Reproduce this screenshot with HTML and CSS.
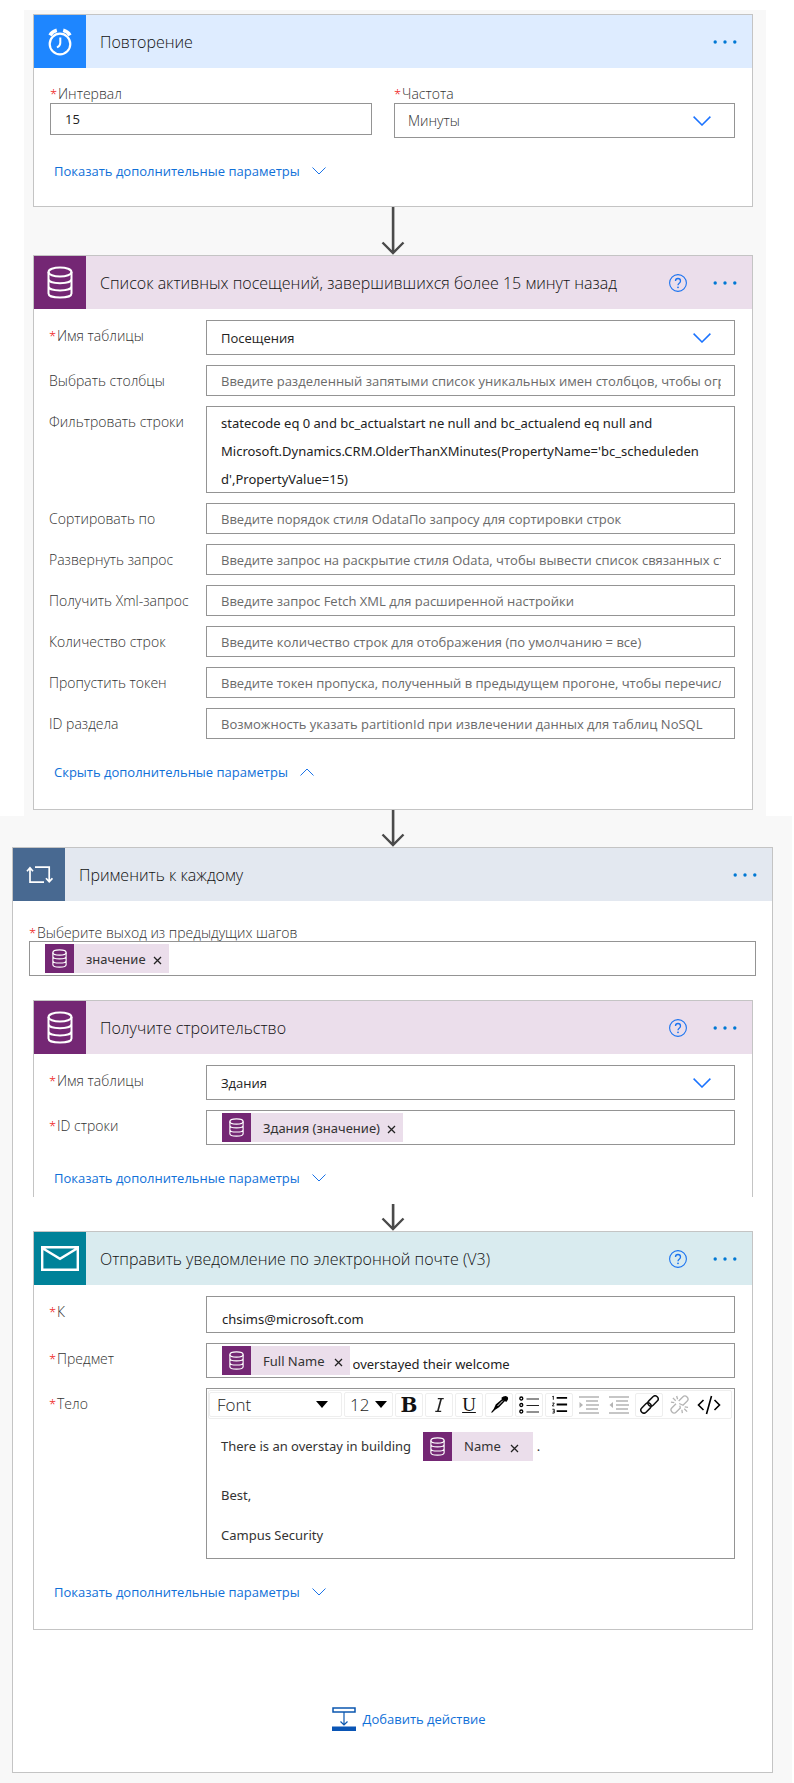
FILE: index.html
```html
<!DOCTYPE html>
<html lang="ru">
<head>
<meta charset="utf-8">
<meta name="viewport" content="width=device-width, initial-scale=1">
<title>Поток</title>
<link rel="stylesheet" href="styles.css">
</head>
<body>
<svg class="sprite" aria-hidden="true">
  <symbol id="i-clock" viewBox="0 0 26 30"><g fill="none" stroke="#fff"><circle cx="13" cy="17" r="10.3" stroke-width="2.2"/><path d="M3 8.3Q5.200 4.500 9.800 3.300M23 8.300Q20.800 4.500 16.200 3.300" stroke-width="3.600"/><path d="M13.300 10.500V16Q13.300 18.600 10 20.500" stroke-width="2"/></g></symbol>
  <symbol id="i-db" viewBox="0 0 26 33"><g fill="none" stroke="#fff" stroke-width="2"><ellipse cx="13" cy="6" rx="11.500" ry="4.600"/><path d="M1.500 6V27.400C1.500 33 24.500 33 24.500 27.400V6M1.500 13C1.500 18.600 24.500 18.600 24.500 13M1.500 20.200C1.500 25.800 24.500 25.800 24.500 20.200"/></g></symbol>
  <symbol id="i-loop" viewBox="0 0 27 18"><path d="M18 16.200H4V2M1 5.200L4 1.800L7 5.200M9 1.200H23.200V15.500M20 12.300L23.200 15.800L26.400 12.300" fill="none" stroke="#fff" stroke-width="1.700"/></symbol>
  <symbol id="i-mail" viewBox="0 0 38 25"><path d="M1.200 1.200H36.800V23.800H1.200ZM1.200 2L19 12.800L36.800 2" fill="none" stroke="#fff" stroke-width="2.400"/></symbol>
  <symbol id="i-dots" viewBox="0 0 24 4"><g fill="#0078d4"><circle cx="2.200" cy="2" r="1.700"/><circle cx="12" cy="2" r="1.700"/><circle cx="21.800" cy="2" r="1.700"/></g></symbol>
  <symbol id="i-help" viewBox="0 0 18 18"><g fill="none" stroke="#1a73f0"><circle cx="9" cy="9" r="8.400" stroke-width="1.100"/><path d="M6.500 7Q6.500 4.500 9 4.500T11.500 7Q11.500 8.300 10.200 9.200Q9 10 9 11.200" stroke-width="1.300"/></g><circle cx="9" cy="13.300" r=".9" fill="#1a73f0"/></symbol>
  <symbol id="i-chev" viewBox="0 0 18 10"><path d="M.6 .6L9 9L17.400 .6" fill="none" stroke="#1a73ff" stroke-width="1.500"/></symbol>
  <symbol id="i-chev-s" viewBox="0 0 14 8"><path d="M.5 .5L7 7L13.500 .5" fill="none" stroke="#1a73e8" stroke-width="1"/></symbol>
  <symbol id="i-x" viewBox="0 0 9 9"><path d="M1 1L8 8M8 1L1 8" fill="none" stroke="#222" stroke-width="1.300"/></symbol>
  <symbol id="i-add" viewBox="0 0 24 24"><path d="M1 1H23V5H1Z" fill="#fff" stroke="#0b57b0" stroke-width="1.500"/><path d="M12 5V18M8.500 14.500L12 18L15.500 14.500" fill="none" stroke="#0b57b0" stroke-width="1.200"/><path d="M0 19.500H24V24H0Z" fill="#0a55b5"/></symbol>
  <symbol id="t-italic" viewBox="0 0 20 20"><path d="M8 2.500H15M5 17.500H12" stroke="#222" stroke-width="1.200"/><path d="M12 2.500L8 17.500" stroke="#222" stroke-width="2"/></symbol>
  <symbol id="t-pen" viewBox="0 0 20 20"><path d="M14 1.500L16.500 1Q19.500 1.500 19 4.500L17.500 7L15.500 6.500L9.500 13L5.500 15.500L2.500 18.500H1L4 14.500L6 10L12.500 4.500L12 3Z" fill="#000"/><path d="M8 11.500L13.500 6" stroke="#fff"/></symbol>
  <symbol id="t-ul" viewBox="0 0 20 20"><path d="M7.500 4H20M7.500 10.500H20M7.500 17H20" stroke="#222" stroke-width="1.200"/><g fill="none" stroke="#000" stroke-width="1.300"><circle cx="2.300" cy="3.500" r="1.500"/><circle cx="2.300" cy="10" r="1.500"/><circle cx="2.300" cy="16.500" r="1.500"/></g></symbol>
  <symbol id="t-ol" viewBox="0 0 20 20"><path d="M7 3H18M7 10H18M7 17H18" stroke="#000" stroke-width="2"/><path d="M3.500 1V5M2.500 2L3.500 1M2.500 8.500H4.500L2.500 11.500H4.500M2.500 15H4.500V19H2.500M3 17H4.500" fill="none" stroke="#000" stroke-width=".9"/></symbol>
  <symbol id="t-in" viewBox="0 0 20 20"><path d="M0 2H20M7 6H19M7 10H20M7 14H19M0 18H20" stroke="#b4b4b4" stroke-width="1.300"/><path d="M.5 7L4 10L.5 13Z" fill="#b4b4b4"/></symbol>
  <symbol id="t-out" viewBox="0 0 20 20"><path d="M0 2H20M7 6H19M7 10H20M7 14H19M0 18H20" stroke="#b4b4b4" stroke-width="1.300"/><path d="M4 7L.5 10L4 13Z" fill="#b4b4b4"/></symbol>
  <symbol id="t-link" viewBox="0 0 20 20"><g fill="none" stroke="currentColor" stroke-width="1.600" transform="rotate(-45 10 10)"><rect x="-1.500" y="6.800" width="12.500" height="6.400" rx="3.200"/><rect x="9" y="6.800" width="12.500" height="6.400" rx="3.200"/></g></symbol>
  <symbol id="t-unlink" viewBox="0 0 20 20"><g fill="none" stroke="#b4b4b4" stroke-width="1.400"><g transform="rotate(-45 10 10)"><path d="M8 6.800H2A3.200 3.200 0 0 0 2 13.200H8L9.500 11M12 6.800H18A3.200 3.200 0 0 1 18 13.200H12L10.500 9"/></g><path d="M7 1L8 4.500M3 3L6 6M1 7.500L4.500 8M12.500 15.500L13 19M15 14.500L18 17.500M15.500 12.500L19 13"/></g></symbol>
  <symbol id="t-code" viewBox="0 0 24 20"><path d="M6.500 5L1.500 10L6.500 15M17.500 5L22.500 10L17.500 15M14.500 1L9.500 19" fill="none" stroke="#000" stroke-width="1.600"/></symbol>
</svg>

<main class="flow">
  <section class="flow-top">
    <article class="card">
      <header class="card-head head-blue">
        <span class="card-icon bg-blue"><svg width="26" height="30"><use href="#i-clock"/></svg></span>
        <h2>Повторение</h2>
        <button class="icon-btn" aria-label="Меню"><svg width="24" height="4"><use href="#i-dots"/></svg></button>
      </header>
      <div class="card-body body-recur">
        <div class="pair">
          <div class="stack">
            <label for="interval"><span class="req">*</span>Интервал</label>
            <input id="interval" class="field short" value="15">
          </div>
          <div class="stack">
            <label for="freq"><span class="req">*</span>Частота</label>
            <div class="select"><select id="freq" class="soft"><option>Минуты</option></select><svg width="18" height="10"><use href="#i-chev"/></svg></div>
          </div>
        </div>
        <a class="more" href="#">Показать дополнительные параметры<svg width="14" height="8"><use href="#i-chev-s"/></svg></a>
      </div>
    </article>

    <svg class="arrow" width="24" height="48" viewBox="0 0 24 48"><path d="M13.500 0V46" stroke="#ccc"/><path d="M12 0V46M1.500 35.500L12 46L22.500 35.500" fill="none" stroke="#4a4a4a" stroke-width="2.400"/></svg>

    <article class="card">
      <header class="card-head head-purple">
        <span class="card-icon bg-purple"><svg width="26" height="33"><use href="#i-db"/></svg></span>
        <h2>Список активных посещений, завершившихся более 15 минут назад</h2>
        <button class="icon-btn" aria-label="Справка"><svg width="18" height="18"><use href="#i-help"/></svg></button>
        <button class="icon-btn" aria-label="Меню"><svg width="24" height="4"><use href="#i-dots"/></svg></button>
      </header>
      <div class="card-body">
        <div class="row"><label for="table1"><span class="req">*</span>Имя таблицы</label>
          <div class="select"><select id="table1"><option>Посещения</option></select><svg width="18" height="10"><use href="#i-chev"/></svg></div></div>
        <div class="row"><label for="cols">Выбрать столбцы</label><input id="cols" class="field" placeholder="Введите разделенный запятыми список уникальных имен столбцов, чтобы ограничить"></div>
        <div class="row"><label for="filter">Фильтровать строки</label><textarea id="filter" class="field area" rows="3">statecode eq 0 and bc_actualstart ne null and bc_actualend eq null and Microsoft.Dynamics.CRM.OlderThanXMinutes(PropertyName='bc_scheduledend',PropertyValue=15)</textarea></div>
        <div class="row"><label for="sort">Сортировать по</label><input id="sort" class="field" placeholder="Введите порядок стиля OdataПо запросу для сортировки строк"></div>
        <div class="row"><label for="expand">Развернуть запрос</label><input id="expand" class="field" placeholder="Введите запрос на раскрытие стиля Odata, чтобы вывести список связанных строк"></div>
        <div class="row"><label for="xml">Получить Xml-запрос</label><input id="xml" class="field" placeholder="Введите запрос Fetch XML для расширенной настройки"></div>
        <div class="row"><label for="count">Количество строк</label><input id="count" class="field" placeholder="Введите количество строк для отображения (по умолчанию = все)"></div>
        <div class="row"><label for="skip">Пропустить токен</label><input id="skip" class="field" placeholder="Введите токен пропуска, полученный в предыдущем прогоне, чтобы перечислить"></div>
        <div class="row"><label for="part">ID раздела</label><input id="part" class="field" placeholder="Возможность указать partitionId при извлечении данных для таблиц NoSQL"></div>
        <a class="more" href="#">Скрыть дополнительные параметры<svg class="flip" width="14" height="8"><use href="#i-chev-s"/></svg></a>
      </div>
    </article>
  </section>

  <section class="flow-loop">
    <svg class="arrow arrow-join" width="24" height="37" viewBox="0 0 24 37"><path d="M13.500 0V35" stroke="#ccc"/><path d="M12 0V35M1.500 24.500L12 35L22.500 24.500" fill="none" stroke="#4a4a4a" stroke-width="2.400"/></svg>
    <article class="card">
      <header class="card-head head-slate">
        <span class="card-icon bg-slate"><svg width="27" height="18"><use href="#i-loop"/></svg></span>
        <h2>Применить к каждому</h2>
        <button class="icon-btn" aria-label="Меню"><svg width="24" height="4"><use href="#i-dots"/></svg></button>
      </header>
      <div class="loop-body">
        <div class="stack" role="group" aria-labelledby="out-label">
          <span class="label" id="out-label"><span class="req">*</span>Выберите выход из предыдущих шагов</span>
          <div class="field tokens">
            <span class="chip"><span class="chip-icon"><svg width="15" height="19"><use href="#i-db"/></svg></span>значение<button aria-label="Удалить"><svg width="9" height="9"><use href="#i-x"/></svg></button></span>
          </div>
        </div>

        <div class="steps">
          <article class="card card-open">
            <header class="card-head head-purple">
              <span class="card-icon bg-purple"><svg width="26" height="33"><use href="#i-db"/></svg></span>
              <h2>Получите строительство</h2>
              <button class="icon-btn" aria-label="Справка"><svg width="18" height="18"><use href="#i-help"/></svg></button>
              <button class="icon-btn" aria-label="Меню"><svg width="24" height="4"><use href="#i-dots"/></svg></button>
            </header>
            <div class="card-body">
              <div class="row"><label for="table2"><span class="req">*</span>Имя таблицы</label>
                <div class="select"><select id="table2"><option>Здания</option></select><svg width="18" height="10"><use href="#i-chev"/></svg></div></div>
              <div class="row"><span class="label"><span class="req">*</span>ID строки</span>
                <div class="field tokens"><span class="chip"><span class="chip-icon"><svg width="15" height="19"><use href="#i-db"/></svg></span>Здания (значение)<button aria-label="Удалить"><svg width="9" height="9"><use href="#i-x"/></svg></button></span></div></div>
              <a class="more" href="#">Показать дополнительные параметры<svg width="14" height="8"><use href="#i-chev-s"/></svg></a>
            </div>
          </article>

          <svg class="arrow arrow-gap" width="24" height="27" viewBox="0 0 24 27"><path d="M13.500 0V25" stroke="#ccc"/><path d="M12 0V25M1.500 14.500L12 25L22.500 14.500" fill="none" stroke="#4a4a4a" stroke-width="2.400"/></svg>

          <article class="card">
            <header class="card-head head-teal">
              <span class="card-icon bg-teal"><svg width="38" height="25"><use href="#i-mail"/></svg></span>
              <h2>Отправить уведомление по электронной почте (V3)</h2>
              <button class="icon-btn" aria-label="Справка"><svg width="18" height="18"><use href="#i-help"/></svg></button>
              <button class="icon-btn" aria-label="Меню"><svg width="24" height="4"><use href="#i-dots"/></svg></button>
            </header>
            <div class="card-body">
              <div class="row"><label for="to"><span class="req">*</span>К</label><input id="to" class="field tall" value="chsims@microsoft.com"></div>
              <div class="row"><label for="subject"><span class="req">*</span>Предмет</label>
                <div class="field tokens"><span class="chip chip-wide"><span class="chip-icon"><svg width="15" height="19"><use href="#i-db"/></svg></span>Full Name<button aria-label="Удалить"><svg width="9" height="9"><use href="#i-x"/></svg></button></span><input id="subject" class="inline-input" value="overstayed their welcome"></div></div>
              <div class="row"><span class="label" id="body-label"><span class="req">*</span>Тело</span>
                <div class="editor">
                  <div class="toolbar">
                    <span class="tool-select tool-font"><select aria-label="Шрифт"><option>Font</option></select></span>
                    <span class="tool-select tool-size"><select aria-label="Размер"><option>12</option></select></span>
                    <button class="tool bold" aria-label="Полужирный">B</button>
                    <button class="tool" aria-label="Курсив"><svg width="17" height="18"><use href="#t-italic"/></svg></button>
                    <button class="tool under" aria-label="Подчеркнутый">U</button>
                    <button class="tool" aria-label="Цвет"><svg width="19" height="19"><use href="#t-pen"/></svg></button>
                    <button class="tool" aria-label="Маркеры"><svg width="20" height="20"><use href="#t-ul"/></svg></button>
                    <button class="tool" aria-label="Нумерация"><svg width="19" height="19"><use href="#t-ol"/></svg></button>
                    <button class="tool off" aria-label="Увеличить отступ"><svg width="20" height="20"><use href="#t-in"/></svg></button>
                    <button class="tool off" aria-label="Уменьшить отступ"><svg width="20" height="20"><use href="#t-out"/></svg></button>
                    <button class="tool" aria-label="Ссылка"><svg width="19" height="19"><use href="#t-link"/></svg></button>
                    <button class="tool off" aria-label="Убрать ссылку"><svg width="19" height="19"><use href="#t-unlink"/></svg></button>
                    <button class="tool off" aria-label="Код"><svg width="24" height="20"><use href="#t-code"/></svg></button>
                  </div>
                  <div class="mail-text" contenteditable="true" role="textbox" aria-labelledby="body-label">
                    <p class="mail-line">There is an overstay in building <span class="chip chip-wide" contenteditable="false"><span class="chip-icon"><svg width="15" height="19"><use href="#i-db"/></svg></span>Name<button aria-label="Удалить"><svg width="9" height="9"><use href="#i-x"/></svg></button></span>.</p>
                    <p>Best,</p>
                    <p>Campus Security</p>
                  </div>
                </div></div>
              <a class="more" href="#">Показать дополнительные параметры<svg width="14" height="8"><use href="#i-chev-s"/></svg></a>
            </div>
          </article>
        </div>

        <button class="add"><svg width="24" height="24"><use href="#i-add"/></svg>Добавить действие</button>
      </div>
    </article>
  </section>
</main>
</body>
</html>
```

FILE: styles.css
```css
* { box-sizing: border-box; }

body {
  margin: 0;
  background: #fff;
  color: #222;
  font-family: "Open Sans", "Noto Sans", sans-serif;
  font-size: 13px;
  font-weight: 400;
}

button, input, select, textarea { font: inherit; color: inherit; }
button { padding: 0; border: 0; background: none; cursor: pointer; }
svg { display: block; flex: none; }
h2, p { margin: 0; }
.sprite { position: absolute; width: 0; height: 0; }

.flow { padding-top: 10px; }
.flow-top { margin: 0 28px 0 24px; padding: 4px 13px 6px 9px; background: #f8f8f8; }
.flow-loop { margin-right: 2px; padding: 0 19px 10px 12px; background: #f8f8f8; }

.arrow { margin: 0 auto; }
.arrow-join { position: relative; top: -6px; margin-bottom: -6px; }
.arrow-gap { margin-top: 7px; }

/* Cards */
.card { border: 1px solid #c4c4c4; background: #fff; }
.card-open { border-bottom: 0; }
.card-head { display: flex; align-items: center; height: 53px; padding-right: 15px; gap: 26px; }
.card-head h2 { flex: 1; min-width: 0; margin-left: -12px; color: #111; font-size: 16px; font-weight: 300; line-height: 20px; white-space: nowrap; }
.card-icon { display: flex; align-items: center; justify-content: center; flex: none; width: 52px; height: 53px; }
.icon-btn { flex: none; padding: 8px 0; }
.head-blue { background: #deecff; }
.head-purple { background: #ebdeeb; }
.head-slate { background: #e3e8f0; }
.head-teal { background: #d9ebef; }
.bg-blue { background: #1e86ff; }
.bg-purple { background: #742774; }
.bg-slate { background: #486991; }
.bg-teal { background: #008299; }

.card-body { display: flex; flex-direction: column; gap: 10px; padding: 11px 17px 27px 15px; }
.body-recur { padding: 17px 17px 25px 16px; }
.card-open .card-body { padding-bottom: 9px; }

/* Form */
.row { display: grid; grid-template-columns: 157px minmax(0, 1fr); }
.row > label, .row > .label { line-height: 31px; height: 31px; }
label, .label { color: #333; font-size: 14px; font-weight: 300; white-space: nowrap; }
.req { display: inline-block; width: 8px; color: #e00; font-size: 13px; }
.stack { display: flex; flex-direction: column; }
.stack > label, .stack > .label { line-height: 18px; }
.pair { display: grid; grid-template-columns: 322fr 341fr; gap: 22px; align-items: start; }

.field { width: 100%; height: 31px; padding: 0 13px 0 14px; border: 1px solid #949494; border-radius: 0; background: #fff; font-size: 13px; outline: 0; }
.field::placeholder { color: #6a6a6a; opacity: 1; }
.short { height: 32px; }
.tall { height: 37px; padding: 8px 13px 0 15px; }
.area { display: block; height: 87px; padding: 2px 31px 0 14px; line-height: 28px; resize: none; overflow: hidden; }
.area, .tall, .tokens, .mail-text { font-family: "Noto Sans", "Open Sans", sans-serif; }

.select { display: grid; align-items: center; }
.select > * { grid-area: 1 / 1; }
.select select { width: 100%; height: 35px; padding: 0 40px 0 14px; border: 1px solid #949494; border-radius: 0; background: #fff; appearance: none; font-size: 13px; }
.select .soft { padding-left: 13px; color: #333; font-size: 14px; font-weight: 300; }
.select svg { justify-self: end; margin-right: 24px; pointer-events: none; }

.tokens { display: flex; align-items: center; height: 35px; padding-left: 15px; }
.chip { display: inline-flex; align-items: center; height: 29px; padding-right: 7px; background: #ebdeeb; color: #333; white-space: nowrap; }
.chip-icon { display: flex; align-items: center; justify-content: center; width: 29px; height: 29px; margin-right: 12px; background: #742774; }
.chip button { margin: 3px 0 0 7px; }
.chip-wide button { margin-left: 9px; }
.inline-input { flex: 1; min-width: 0; padding: 6px 0 0 3px; border: 0; outline: 0; background: none; }

.more { display: flex; align-items: center; gap: 12px; align-self: flex-start; margin: 13px 0 0 5px; color: #1070d8; font-size: 13px; line-height: 20px; text-decoration: none; }
.body-recur .more { margin-left: 4px; }
.flip { transform: rotate(180deg); }

/* Loop */
.loop-body { padding: 22px 16px 41px; }
.loop-body > .stack > .label { height: 18px; line-height: 20px; }
.steps { padding: 24px 3px 0 4px; }
.add { display: flex; align-items: center; gap: 7px; margin: 77px auto 0; padding-left: 32px; color: #1070d8; line-height: 24px; }

/* Rich text editor */
.editor { min-height: 171px; border: 1px solid #949494; padding: 1px 2px 3px 1px; }
.toolbar { display: flex; align-items: center; gap: 2px; height: 29px; border: 1px solid #eee; border-radius: 2px; overflow: hidden; }
.tool-select { position: relative; flex: none; height: 25px; border: 1px solid #eee; border-radius: 2px; }
.tool-select::after { content: ""; position: absolute; top: 8px; right: 13px; border: 6px solid transparent; border-top: 7px solid #000; border-bottom: 0; pointer-events: none; }
.tool-select select { width: 100%; height: 23px; padding: 0 0 0 7px; border: 0; background: none; appearance: none; font-size: 17px; font-weight: 300; line-height: 23px; }
.tool-font { width: 133px; }
.tool-size { width: 49px; }
.tool-size select { padding-left: 5px; }
.tool-size::after { right: 5px; }
.tool { display: flex; align-items: center; justify-content: center; flex: 0 1 28px; min-width: 0; height: 24px; border: 1px solid #eee; border-radius: 2px; color: #111; font-family: "Liberation Serif", serif; }
.off { border-color: transparent; }
.bold { font-family: "DejaVu Serif", serif; font-size: 20px; font-weight: 700; line-height: 22px; }
.under { font-size: 19px; line-height: 22px; text-decoration: underline; }
.mail-text { padding: 13px 13px 0; color: #333; outline: 0; }
.mail-text p { line-height: 40px; }
.mail-text .mail-line { display: flex; align-items: center; gap: 4px; margin-bottom: 14px; line-height: 29px; }
.mail-text .chip { margin-left: 8px; padding-right: 14px; }
```
